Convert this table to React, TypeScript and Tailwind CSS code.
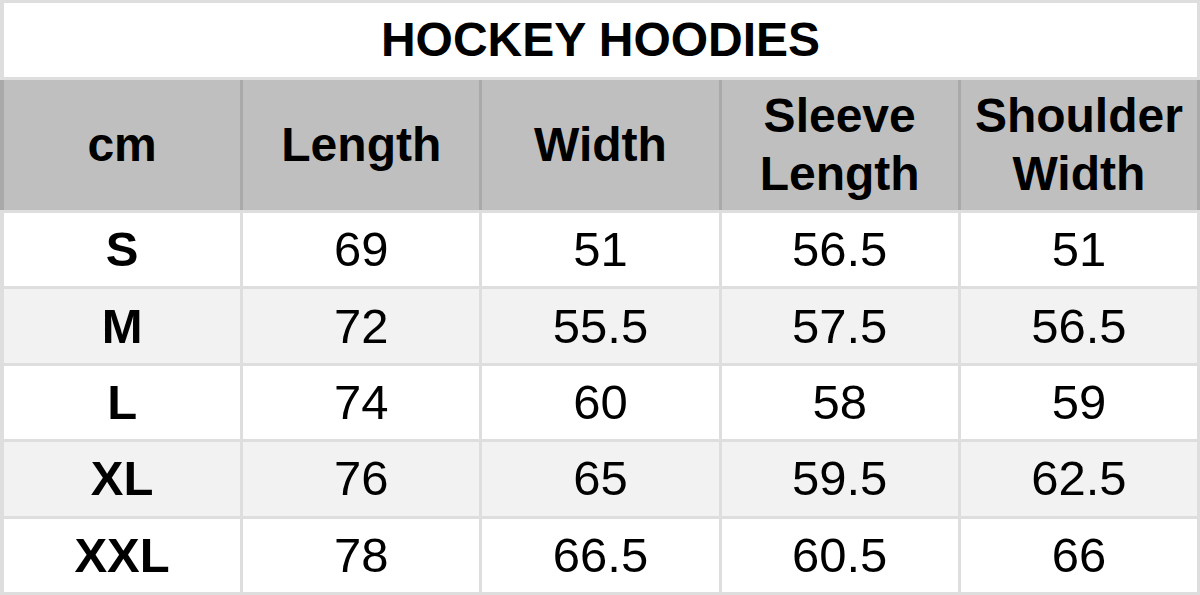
const headers = ['cm', 'Length', 'Width', 'Sleeve\nLength', 'Shoulder\nWidth'];

const rows: string[][] = [
  ['S', '69', '51', '56.5', '51'],
  ['M', '72', '55.5', '57.5', '56.5'],
  ['L', '74', '60', '58', '59'],
  ['XL', '76', '65', '59.5', '62.5'],
  ['XXL', '78', '66.5', '60.5', '66'],
];

export default function App() {
  return (
    <div
      className="w-[1200px] h-[595px] bg-[#dedede] flex flex-col gap-[3px] py-[3px] text-black"
      style={{ fontFamily: '"Liberation Sans", Arial, sans-serif' }}
    >
      {/* Title */}
      <div className="ml-[4px] mr-[3px] h-[74px] shrink-0 bg-white flex items-center justify-center">
        <span className="text-[48px] font-bold leading-none">HOCKEY HOODIES</span>
      </div>

      {/* Header */}
      <div className="h-[130px] shrink-0 grid grid-cols-5 gap-x-[3px] bg-[#a9a9a9] pl-[4px] pr-[3px]">
        {headers.map((h) => (
          <div key={h} className="bg-[#bfbfbf] flex items-center justify-center text-center">
            <span className="text-[48px] font-bold leading-[58px] whitespace-pre-line">{h}</span>
          </div>
        ))}
      </div>

      {/* Body */}
      <div className="flex-1 grid grid-rows-5 gap-[3px] ml-[4px] mr-[3px]">
        {rows.map((r, i) => (
          <div key={r[0]} className="grid grid-cols-5 gap-x-[3px]">
            {r.map((v, j) => (
              <div
                key={j}
                className={`flex items-center justify-center ${i % 2 === 1 ? 'bg-[#f2f2f2]' : 'bg-white'}`}
              >
                <span className={`text-[49px] leading-none ${j === 0 ? 'font-bold' : ''}`}>{v}</span>
              </div>
            ))}
          </div>
        ))}
      </div>
    </div>
  );
}
